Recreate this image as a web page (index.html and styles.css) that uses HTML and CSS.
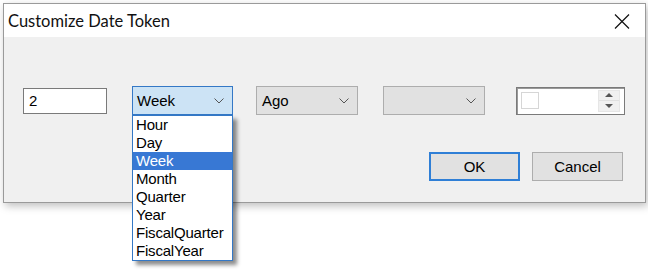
FILE: index.html
```html
<!DOCTYPE html>
<html lang="en">
<head>
  <meta charset="UTF-8" />
  <title>Customize Date Token</title>
  <link rel="stylesheet" href="styles.css">
</head>
<body>
  <div class="dialog">
    <div class="titlebar">
      <span class="title">Customize Date Token</span>
      <svg class="close" width="16" height="15" viewBox="0 0 16 15">
        <path d="M1 0.5 L15 14.5 M15 0.5 L1 14.5" stroke="#111" stroke-width="1.2" fill="none"/>
      </svg>
    </div>

    <div class="content">
      <div class="row">
        <div class="textbox">2</div>

        <div class="combo focused">
          <span class="value">Week</span>
          <svg class="chev" width="10" height="6" viewBox="0 0 10 6"><path d="M0.5 0.5 L5 5 L9.5 0.5" stroke="#555" fill="none"/></svg>
          <ul class="droplist">
            <li>Hour</li>
            <li>Day</li>
            <li class="selected">Week</li>
            <li>Month</li>
            <li>Quarter</li>
            <li>Year</li>
            <li>FiscalQuarter</li>
            <li>FiscalYear</li>
          </ul>
        </div>

        <div class="combo ago">
          <span class="value">Ago</span>
          <svg class="chev" width="10" height="6" viewBox="0 0 10 6"><path d="M0.5 0.5 L5 5 L9.5 0.5" stroke="#555" fill="none"/></svg>
        </div>

        <div class="combo empty">
          <span class="value"></span>
          <svg class="chev" width="10" height="6" viewBox="0 0 10 6"><path d="M0.5 0.5 L5 5 L9.5 0.5" stroke="#555" fill="none"/></svg>
        </div>

        <div class="numeric">
          <span class="check"></span>
          <span class="spin">
            <span class="spin-btn"><svg width="8" height="4" viewBox="0 0 8 4"><path d="M0 4 L4 0 L8 4 Z" fill="#555"/></svg></span>
            <span class="spin-btn"><svg width="8" height="4" viewBox="0 0 8 4"><path d="M0 0 L4 4 L8 0 Z" fill="#555"/></svg></span>
          </span>
        </div>
      </div>

      <div class="buttons">
        <button class="btn default">OK</button>
        <button class="btn">Cancel</button>
      </div>
    </div>
  </div>
</body>
</html>
```

FILE: styles.css
```css
* {
  box-sizing: border-box;
  margin: 0;
  padding: 0;
}

html, body {
  height: 100%;
}

body {
  background: #fff;
  font-family: 'Liberation Sans', Arial, sans-serif;
  font-size: 15px;
  color: #000;
  padding: 3px 0 0 3px;
}

.dialog {
  position: relative;
  width: 643px;
  height: 200px;
  border: 1px solid #9a9a9a;
  background: #f0f0f0;
  box-shadow: 2px 3px 8px rgba(0, 0, 0, 0.25);
}

.titlebar {
  height: 33px;
  background: #fff;
  display: flex;
  align-items: center;
  justify-content: space-between;
  padding: 0 15px 0 4px;
}

.title {
  font-family: Lato, sans-serif;
  font-size: 16.5px;
  color: #111;
}

.close {
  margin-top: 2px;
}

.content {
  padding: 49px 0 0 19px;
}

.row {
  display: flex;
  align-items: center;
  position: relative;
  z-index: 3;
}

.textbox {
  width: 84px;
  height: 26px;
  background: #fff;
  border: 1px solid #7a7a7a;
  padding: 3px 0 0 5px;
  line-height: 18px;
}

.combo {
  position: relative;
  width: 102px;
  height: 29px;
  border: 1px solid #adadad;
  background: #e1e1e1;
  display: flex;
  align-items: center;
  justify-content: space-between;
  padding: 0 8px 0 5px;
}

.combo .value {
  line-height: 18px;
}

.focused {
  width: 101px;
  margin-left: 25px;
  border-color: #3478c6;
  background: #cce3f5;
  padding-left: 4px;
}

.ago {
  margin-left: 23px;
}

.empty {
  margin-left: 25px;
}

.droplist {
  position: absolute;
  top: 28px;
  left: -1px;
  width: 101px;
  height: 146px;
  list-style: none;
  background: #fff;
  border: 1px solid #3478c6;
  box-shadow: 4px 4px 4px rgba(0, 0, 0, 0.45);
  z-index: 5;
}

.droplist li {
  height: 18px;
  line-height: 18px;
  padding-left: 3px;
  letter-spacing: -0.2px;
}

.droplist .selected {
  background: #3878d4;
  color: #fff;
}

.numeric {
  width: 109px;
  height: 28px;
  margin-left: 31px;
  background: #fff;
  border: 1px solid #7a7a7a;
  box-shadow: inset 1px 1px 0 #9a9a9a;
  display: flex;
  align-items: center;
  justify-content: space-between;
  padding: 0 4px 0 4px;
}

.check {
  width: 18px;
  height: 17px;
  border: 1px solid #d6d6d6;
  background: #fff;
}

.spin {
  display: flex;
  flex-direction: column;
  width: 22px;
  height: 22px;
  border: 1px solid #e6e6e6;
}

.spin-btn {
  flex: 1;
  background: #f0f0f0;
  display: flex;
  align-items: center;
  justify-content: center;
}

.spin-btn + .spin-btn {
  border-top: 1px solid #e0e0e0;
}

.buttons {
  display: flex;
  justify-content: flex-end;
  gap: 12px;
  padding: 37px 22px 0 0;
}

.btn {
  width: 91px;
  height: 29px;
  font-family: 'Liberation Sans', Arial, sans-serif;
  font-size: 15px;
  color: #000;
  background: #e1e1e1;
  border: 1px solid #adadad;
}

.btn.default {
  border: 2px solid #2f7fd6;
}
```
